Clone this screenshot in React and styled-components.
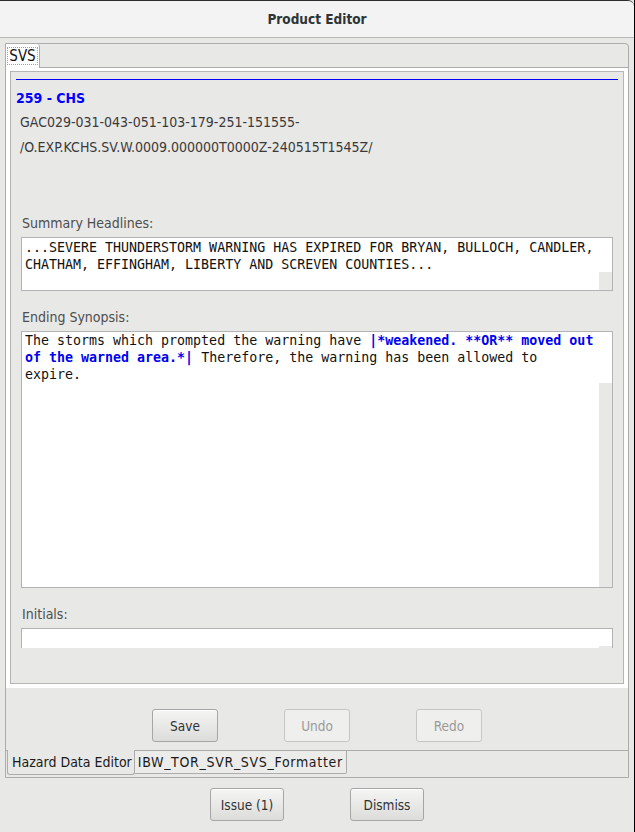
import React from "react";
import styled, { createGlobalStyle } from "styled-components";

const GlobalStyle = createGlobalStyle`
  html, body {
    margin: 0;
    padding: 0;
    background: #e8e8e7;
  }
  body {
    font-family: "DejaVu Sans Condensed", "DejaVu Sans", sans-serif;
  }
`;

const Window = styled.div`
  width: 635px;
  height: 832px;
  box-sizing: border-box;
  background: #e8e8e7;
  border-right: 1px solid #000;
  display: flex;
  flex-direction: column;
  overflow: hidden;
`;

const TitleBar = styled.div`
  height: 38px;
  box-sizing: border-box;
  background: #f3f3f3;
  border-top: 1px solid #2c2c2c;
  border-bottom: 1px solid #b9b9b9;
  border-top-right-radius: 6px;
  display: flex;
  align-items: center;
  justify-content: center;
  font-size: 13.5px;
  font-weight: bold;
  color: #2e3436;
`;

const Frame = styled.div`
  margin: 5px 5px 0 5px;
  border: 1px solid #acacac;
  border-top-right-radius: 4px;
  padding-bottom: 2px;
  display: flex;
  flex-direction: column;
`;

const TopTabs = styled.div`
  display: flex;
  height: 24px;
`;

const TopTab = styled.div`
  width: 33px;
  background: #fff;
  border-right: 1px solid #acacac;
  border-top-right-radius: 3px;
  display: flex;
  align-items: center;
  justify-content: center;
  font-size: 15px;
  color: #111;
`;

const FocusLabel = styled.span`
  border: 1px dotted #a0a0a0;
  padding: 0 1px;
  line-height: 16px;
`;

const TabFiller = styled.div`
  flex: 1;
  border-bottom: ${(p) => (p.bottom ? "1px solid #acacac" : "none")};
  border-top: ${(p) => (p.top ? "1px solid #acacac" : "none")};
`;

const TabBody = styled.div`
  background: #fff;
  padding: 3px 4px 4px 4px;
`;

const Panel = styled.div`
  height: 613px;
  box-sizing: border-box;
  border: 1px solid #b5b5b5;
  background: #e8e8e7;
  padding: 7px 5px 0 5px;
`;

const BlueRule = styled.div`
  height: 0;
  border-top: 1px solid #0000ff;
`;

const ProductTitle = styled.div`
  margin-top: 8px;
  line-height: 20px;
  font-size: 14px;
  font-weight: bold;
  color: #0000ff;
`;

const CodeLine = styled.div`
  margin-top: ${(p) => p.gap || 0}px;
  padding-left: 4px;
  line-height: 25px;
  font-size: 14px;
  color: #3a3a3a;
`;

const Fields = styled.div`
  padding: 0 5px;
`;

const FieldLabel = styled.div`
  margin-top: ${(p) => p.gap}px;
  margin-bottom: 5px;
  padding-left: 1px;
  line-height: 18px;
  font-size: 14px;
  color: #4e4e4e;
`;

const TextBox = styled.div`
  height: ${(p) => p.h}px;
  box-sizing: border-box;
  border: 1px solid #b3b3b3;
  border-bottom: ${(p) => (p.open ? "none" : "1px solid #b3b3b3")};
  background: #fff;
  display: flex;
`;

const TextContent = styled.div`
  flex: 1;
  padding: ${(p) => p.top}px 3px 0 3px;
  font-family: "DejaVu Sans Mono", "Liberation Mono", monospace;
  font-size: 13.3px;
  line-height: 17px;
  color: #111;
  white-space: pre;
  overflow: hidden;
`;

const TextLine = styled.div`
  height: 17px;
`;

const Tag = styled.span`
  color: #0000f0;
  font-weight: bold;
`;

const ScrollCol = styled.div`
  width: 13px;
  display: flex;
  flex-direction: column;
`;

const ScrollGap = styled.div`
  height: ${(p) => p.h}px;
  flex-shrink: 0;
`;

const ScrollTrack = styled.div`
  flex: 1;
  background: #e8e8e7;
`;

const ButtonRow = styled.div`
  display: flex;
  justify-content: center;
  gap: ${(p) => p.gap}px;
  padding-top: ${(p) => p.top}px;
  height: ${(p) => p.h}px;
  box-sizing: border-box;
`;

const Button = styled.button`
  width: ${(p) => p.w}px;
  height: 33px;
  box-sizing: border-box;
  border-radius: 3px;
  font-family: "DejaVu Sans Condensed", "DejaVu Sans", sans-serif;
  font-size: 13.5px;
  padding: 0;
  border: 1px solid ${(p) => (p.disabled ? "#c6c6c6" : "#a6a6a6")};
  background: ${(p) =>
    p.disabled ? "#efefee" : "linear-gradient(#f5f5f4, #dcdcdb)"};
  color: ${(p) => (p.disabled ? "#9a9a9a" : "#2e3436")};
  box-shadow: ${(p) => (p.disabled ? "none" : "inset 0 1px #fff")};
`;

const BottomTabs = styled.div`
  display: flex;
  height: 25px;
`;

const BottomTab = styled.div`
  height: ${(p) => (p.active ? 25 : 24)}px;
  box-sizing: border-box;
  padding: 0 ${(p) => (p.active ? 2 : 3)}px 0 ${(p) => (p.active ? 4 : 3)}px;
  display: flex;
  align-items: center;
  font-size: 14px;
  letter-spacing: ${(p) => p.spacing || 0}px;
  color: #1a1a1a;
  background: ${(p) => (p.active ? "#e8e8e7" : "#ececeb")};
  border-left: ${(p) => (p.active ? "1px solid #acacac" : "none")};
  border-right: 1px solid #acacac;
  border-bottom: 1px solid #acacac;
  border-top: ${(p) => (p.active ? "none" : "1px solid #acacac")};
  border-radius: ${(p) => (p.active ? "0 0 3px 3px" : "0 0 2px 0")};
`;

const EdgeFiller = styled.div`
  width: 1px;
  border-top: 1px solid #acacac;
`;

export default function App() {
  return (
    <Window>
      <GlobalStyle />
      <TitleBar>Product Editor</TitleBar>
      <Frame>
        <TopTabs>
          <TopTab>
            <FocusLabel>SVS</FocusLabel>
          </TopTab>
          <TabFiller bottom />
        </TopTabs>
        <TabBody>
          <Panel>
            <BlueRule />
            <ProductTitle>259 - CHS</ProductTitle>
            <CodeLine gap={2}>GAC029-031-043-051-103-179-251-151555-</CodeLine>
            <CodeLine>/O.EXP.KCHS.SV.W.0009.000000T0000Z-240515T1545Z/</CodeLine>
            <Fields>
              <FieldLabel gap={54}>Summary Headlines:</FieldLabel>
              <TextBox h={54}>
                <TextContent top={1}>
                  <TextLine>...SEVERE THUNDERSTORM WARNING HAS EXPIRED FOR BRYAN, BULLOCH, CANDLER,</TextLine>
                  <TextLine>CHATHAM, EFFINGHAM, LIBERTY AND SCREVEN COUNTIES...</TextLine>
                </TextContent>
                <ScrollCol>
                  <ScrollGap h={34} />
                  <ScrollTrack />
                </ScrollCol>
              </TextBox>

              <FieldLabel gap={17}>Ending Synopsis:</FieldLabel>
              <TextBox h={257}>
                <TextContent top={0}>
                  <TextLine>
                    {"The storms which prompted the warning have "}
                    <Tag>|*weakened. **OR** moved out</Tag>
                  </TextLine>
                  <TextLine>
                    <Tag>of the warned area.*|</Tag>
                    {" Therefore, the warning has been allowed to"}
                  </TextLine>
                  <TextLine>expire.</TextLine>
                </TextContent>
                <ScrollCol>
                  <ScrollGap h={51} />
                  <ScrollTrack />
                </ScrollCol>
              </TextBox>

              <FieldLabel gap={17}>Initials:</FieldLabel>
              <TextBox h={20} open>
                <TextContent top={0} />
                <ScrollCol>
                  <ScrollGap h={17} />
                  <ScrollTrack />
                </ScrollCol>
              </TextBox>
            </Fields>
          </Panel>
        </TabBody>

        <ButtonRow gap={66} top={21} h={62}>
          <Button w={66}>Save</Button>
          <Button w={66} disabled>
            Undo
          </Button>
          <Button w={66} disabled>
            Redo
          </Button>
        </ButtonRow>

        <BottomTabs>
          <EdgeFiller />
          <BottomTab active>Hazard Data Editor</BottomTab>
          <BottomTab spacing={0.68}>IBW_TOR_SVR_SVS_Formatter</BottomTab>
          <TabFiller top />
        </BottomTabs>
      </Frame>

      <ButtonRow gap={66} top={10} h={54}>
        <Button w={74}>Issue (1)</Button>
        <Button w={74}>Dismiss</Button>
      </ButtonRow>
    </Window>
  );
}
